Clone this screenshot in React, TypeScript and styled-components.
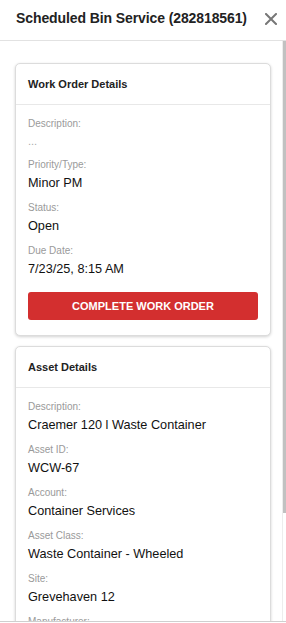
import styled, { createGlobalStyle } from "styled-components";

const GlobalStyle = createGlobalStyle`
  html, body {
    margin: 0;
    padding: 0;
    overflow: hidden;
    background: #fff;
    font-family: "Liberation Sans", Arial, sans-serif;
    color: #111;
  }
`;

type Field = { label: string; value: string; muted?: boolean };

const workOrder: Field[] = [
  { label: "Description:", value: "...", muted: true },
  { label: "Priority/Type:", value: "Minor PM" },
  { label: "Status:", value: "Open" },
  { label: "Due Date:", value: "7/23/25, 8:15 AM" },
];

const asset: Field[] = [
  { label: "Description:", value: "Craemer 120 l Waste Container" },
  { label: "Asset ID:", value: "WCW-67" },
  { label: "Account:", value: "Container Services" },
  { label: "Asset Class:", value: "Waste Container - Wheeled" },
  { label: "Site:", value: "Grevehaven 12" },
  { label: "Manufacturer:", value: "Craemer" },
  { label: "Model:", value: "120 l" },
];

const App = () => {
  return (
    <>
      <GlobalStyle />
      <Panel>
        <Header>
          <Title>Scheduled Bin Service (282818561)</Title>
          <CloseButton aria-label="Close">
            <svg width="12" height="12" viewBox="0 0 12 12">
              <path
                d="M1 1L11 11M11 1L1 11"
                stroke="#777"
                strokeWidth="2"
                strokeLinecap="square"
              />
            </svg>
          </CloseButton>
        </Header>
        <ScrollArea>
          <ScrollBody>
            <Card>
              <CardHeader>Work Order Details</CardHeader>
              <CardBody>
                {workOrder.map((f) => (
                  <FieldRow key={f.label}>
                    <Label>{f.label}</Label>
                    <Value $muted={f.muted}>{f.value}</Value>
                  </FieldRow>
                ))}
                <ActionButton>COMPLETE WORK ORDER</ActionButton>
              </CardBody>
            </Card>
            <Card>
              <CardHeader>Asset Details</CardHeader>
              <CardBody>
                {asset.map((f) => (
                  <FieldRow key={f.label}>
                    <Label>{f.label}</Label>
                    <Value $muted={f.muted}>{f.value}</Value>
                  </FieldRow>
                ))}
              </CardBody>
            </Card>
          </ScrollBody>
          <ScrollTrack>
            <ScrollThumb />
          </ScrollTrack>
        </ScrollArea>
        <Footer />
      </Panel>
    </>
  );
};

export default App;

const Panel = styled.div`
  width: 286px;
  display: flex;
  flex-direction: column;
`;

const Header = styled.div`
  height: 40px;
  border-bottom: 1px solid #e2e2e2;
  display: flex;
  align-items: center;
  justify-content: space-between;
  padding: 0 8px 0 16px;
`;

const Title = styled.div`
  font-size: 14px;
  font-weight: bold;
  color: #222;
  margin-top: -4px;
  letter-spacing: -0.1px;
`;

const CloseButton = styled.button`
  border: none;
  background: none;
  padding: 0;
  width: 14px;
  height: 14px;
  display: flex;
  align-items: center;
  justify-content: center;
  margin-top: -3px;
  cursor: pointer;
`;

const ScrollArea = styled.div`
  position: relative;
  height: 580px;
`;

const ScrollBody = styled.div`
  height: 100%;
  overflow-y: scroll;
  scrollbar-width: none;
  padding: 22px 15px 12px 15px;
  box-sizing: border-box;
  display: flex;
  flex-direction: column;
  gap: 10px;

  &::-webkit-scrollbar {
    display: none;
  }
`;

const ScrollTrack = styled.div`
  position: absolute;
  top: 0;
  right: 0;
  bottom: 0;
  width: 3px;
  border-left: 1px solid #ededed;
  background: #fff;
`;

const ScrollThumb = styled.div`
  height: 472px;
  background: #c1c1c1;
`;

const Card = styled.div`
  flex-shrink: 0;
  border: 1px solid #dcdcdc;
  border-radius: 5px;
  box-shadow: 0 1px 3px rgba(0, 0, 0, 0.18);
  background: #fff;
`;

const CardHeader = styled.div`
  height: 40px;
  display: flex;
  align-items: center;
  padding: 0 12px;
  font-size: 11px;
  font-weight: bold;
  color: #222;
  border-bottom: 1px solid #e8e8e8;
`;

const CardBody = styled.div`
  padding: 12px 12px 15px;
  display: flex;
  flex-direction: column;
`;

const FieldRow = styled.div`
  display: flex;
  flex-direction: column;
  gap: 2px;
  margin-bottom: 9px;
`;

const Label = styled.div`
  font-size: 10px;
  line-height: 14px;
  color: #9a9a9a;
`;

const Value = styled.div<{ $muted?: boolean }>`
  font-size: ${(p) => (p.$muted ? "11px" : "12.7px")};
  line-height: ${(p) => (p.$muted ? "16px" : "18px")};
  color: ${(p) => (p.$muted ? "#aaa" : "#111")};
`;

const ActionButton = styled.button`
  margin-top: 5px;
  height: 28px;
  border: none;
  border-radius: 3px;
  background: #d32f2f;
  color: #fff;
  font-family: "Liberation Sans", Arial, sans-serif;
  font-size: 11px;
  font-weight: bold;
  cursor: pointer;
`;

const Footer = styled.div`
  height: 60px;
  border-top: 1px solid #cfcfcf;
`;
